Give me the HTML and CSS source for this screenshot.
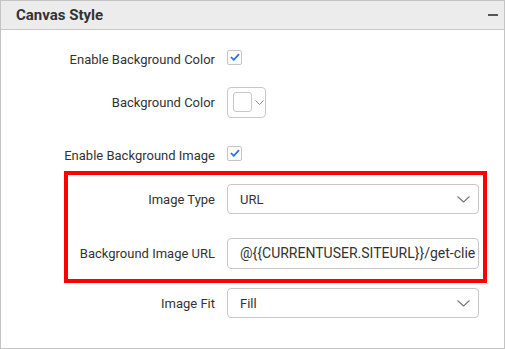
FILE: index.html
```html
<!DOCTYPE html>
<html lang="en">
<head>
    <meta charset="UTF-8">
    <title>Canvas Style</title>
    <link rel="stylesheet" href="styles.css">
</head>
<body>

<div class="panel">
    <div class="panel-header">
        <span class="panel-title">Canvas Style</span>
        <span class="collapse-icon"></span>
    </div>
    <div class="panel-body">
        <div class="row row-first">
            <label class="row-label">Enable Background Color</label>
            <span class="checkbox">
                <svg width="10" height="8" viewBox="0 0 10 8"><path d="M1 4.2 L3.8 6.8 L9 1.2" fill="none" stroke="#2b6ef0" stroke-width="1.8"/></svg>
            </span>
        </div>
        <div class="row row-color">
            <label class="row-label">Background Color</label>
            <div class="color-picker">
                <span class="swatch"></span>
                <svg width="9" height="5" viewBox="0 0 9 5"><path d="M0.5 0.5 L4.5 4.5 L8.5 0.5" fill="none" stroke="#888" stroke-width="1"/></svg>
            </div>
        </div>
        <div class="row row-spaced">
            <label class="row-label">Enable Background Image</label>
            <span class="checkbox">
                <svg width="10" height="8" viewBox="0 0 10 8"><path d="M1 4.2 L3.8 6.8 L9 1.2" fill="none" stroke="#2b6ef0" stroke-width="1.8"/></svg>
            </span>
        </div>
        <div class="row row-type">
            <label class="row-label">Image Type</label>
            <div class="dropdown">
                <span class="field-text">URL</span>
                <svg width="13" height="7" viewBox="0 0 13 7"><path d="M0.5 0.5 L6.5 6 L12.5 0.5" fill="none" stroke="#777" stroke-width="1.1"/></svg>
            </div>
        </div>
        <div class="row row-url">
            <label class="row-label">Background Image URL</label>
            <div class="text-input">
                <span class="field-text url-text">@{{CURRENTUSER.SITEURL}}/get-clie</span>
            </div>
        </div>
        <div class="row row-fit">
            <label class="row-label">Image Fit</label>
            <div class="dropdown">
                <span class="field-text">Fill</span>
                <svg width="13" height="7" viewBox="0 0 13 7"><path d="M0.5 0.5 L6.5 6 L12.5 0.5" fill="none" stroke="#777" stroke-width="1.1"/></svg>
            </div>
        </div>
        <div class="highlight"></div>
    </div>
</div>

</body>
</html>
```

FILE: styles.css
```css
/* Base */
body {
    margin: 0;
    font-family: 'Roboto', 'Liberation Sans', sans-serif;
    color: #333;
    background: #fff;
}

.panel {
    width: 503px;
    height: 347px;
    border: 1px solid #c4c4c4;
    background: #fff;
}

.panel-header {
    height: 28px;
    background: #ececec;
    border-bottom: 1px solid #c8c8c8;
    display: flex;
    align-items: center;
    justify-content: space-between;
    padding: 0 6px 0 15px;
}

.panel-title {
    font-size: 15px;
    font-weight: bold;
    color: #333;
}

.collapse-icon {
    width: 10px;
    height: 2px;
    background: #555;
}

.panel-body {
    position: relative;
    padding-top: 12px;
}

/* Rows */
.row {
    display: flex;
    align-items: center;
    height: 30px;
    margin-bottom: 15px;
}

.row-color {
    margin-bottom: 21px;
}

.row-spaced {
    margin-bottom: 16px;
}

.row-type {
    margin-bottom: 24px;
}

.row-url {
    margin-bottom: 20px;
}

.row-label {
    width: 214px;
    text-align: right;
    font-size: 13px;
    color: #333;
    padding-right: 12px;
    flex-shrink: 0;
}

.row-first .row-label,
.row-spaced .row-label {
    padding-top: 5px;
}

/* Controls */
.checkbox {
    width: 13px;
    height: 13px;
    border: 1px solid #c4c4c4;
    border-radius: 2px;
    display: flex;
    align-items: center;
    justify-content: center;
    background: #fff;
}

.color-picker {
    width: 39px;
    height: 31px;
    box-sizing: border-box;
    border: 1px solid #c8c8c8;
    border-radius: 4px;
    display: flex;
    align-items: center;
    padding-left: 5px;
    gap: 3px;
}

.swatch {
    width: 17px;
    height: 18px;
    border: 1px solid #c8c8c8;
    border-radius: 3px;
    background: #fff;
}

.dropdown,
.text-input {
    width: 252px;
    height: 30px;
    box-sizing: border-box;
    border: 1px solid #c8c8c8;
    border-radius: 4px;
    display: flex;
    align-items: center;
    justify-content: space-between;
    padding: 0 8px 0 12px;
    overflow: hidden;
}

.text-input {
    height: 31px;
    padding-right: 0;
    justify-content: flex-start;
}

.field-text {
    font-size: 13px;
    color: #333;
    white-space: nowrap;
}

.url-text {
    font-size: 14px;
}

/* Annotation box drawn over the image rows */
.highlight {
    position: absolute;
    left: 63px;
    top: 141px;
    width: 415px;
    height: 104px;
    border: 4px solid #ff0000;
}
```
